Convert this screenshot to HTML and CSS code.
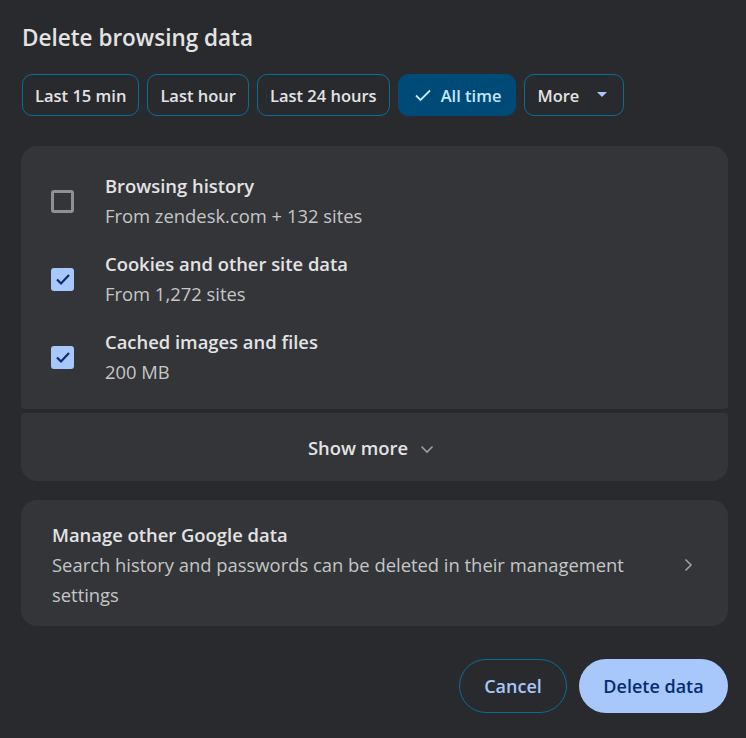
FILE: index.html
```html
<!DOCTYPE html>
<html lang="en">
<head>
    <meta charset="UTF-8">
    <meta name="viewport" content="width=device-width, initial-scale=1.0">
    <title>Delete browsing data</title>
    <link rel="stylesheet" href="styles.css">
</head>
<body>
    <div class="dialog">
        <h1 class="title">Delete browsing data</h1>

        <div class="chips">
            <button class="chip">Last 15 min</button>
            <button class="chip">Last hour</button>
            <button class="chip">Last 24 hours</button>
            <button class="chip selected">
                <svg class="chip-check" width="20" height="20" viewBox="0 0 20 20"><path d="M3 10.5 L7.5 15 L17 5.5" fill="none" stroke="currentColor" stroke-width="1.8"/></svg>
                All time
            </button>
            <button class="chip more">
                More
                <svg class="chip-arrow" width="10" height="6" viewBox="0 0 10 6"><path d="M0 0 H10 L5 5 Z" fill="currentColor"/></svg>
            </button>
        </div>

        <div class="card types">
            <div class="row">
                <span class="checkbox"></span>
                <div class="row-text">
                    <div class="row-title">Browsing history</div>
                    <div class="row-sub">From zendesk.com + 132 sites</div>
                </div>
            </div>
            <div class="row">
                <span class="checkbox checked">
                    <svg width="18" height="18" viewBox="0 0 18 18"><path d="M3 9.5 L7 13.5 L15 5" fill="none" stroke="currentColor" stroke-width="2.2"/></svg>
                </span>
                <div class="row-text">
                    <div class="row-title">Cookies and other site data</div>
                    <div class="row-sub">From 1,272 sites</div>
                </div>
            </div>
            <div class="row">
                <span class="checkbox checked">
                    <svg width="18" height="18" viewBox="0 0 18 18"><path d="M3 9.5 L7 13.5 L15 5" fill="none" stroke="currentColor" stroke-width="2.2"/></svg>
                </span>
                <div class="row-text">
                    <div class="row-title">Cached images and files</div>
                    <div class="row-sub">200 MB</div>
                </div>
            </div>
        </div>

        <div class="card show-more">
            Show more
            <svg class="chevron-down" width="16" height="16" viewBox="0 0 16 16"><path d="M2.5 5.5 L8 11 L13.5 5.5" fill="none" stroke="currentColor" stroke-width="1.6"/></svg>
        </div>

        <div class="card manage">
            <div class="manage-text">
                <div class="row-title">Manage other Google data</div>
                <div class="row-sub">Search history and passwords can be deleted in their management settings</div>
            </div>
            <svg class="chevron-right" width="16" height="16" viewBox="0 0 16 16"><path d="M5.5 2.5 L11 8 L5.5 13.5" fill="none" stroke="currentColor" stroke-width="1.6"/></svg>
        </div>

        <div class="actions">
            <button class="btn cancel">Cancel</button>
            <button class="btn primary">Delete data</button>
        </div>
    </div>
</body>
</html>
```

FILE: styles.css
```css
* {
    margin: 0;
    padding: 0;
    box-sizing: border-box;
}

body {
    background: #292a2e;
    font-family: 'Open Sans', 'Noto Sans', sans-serif;
    color: #e3e3e3;
}

.dialog {
    padding: 23px 18px 0 21px;
}

.title {
    font-size: 22.5px;
    font-weight: 600;
    line-height: 30px;
    padding-left: 1px;
}

.chips {
    display: flex;
    gap: 8px;
    margin-top: 21px;
    padding-left: 1px;
}

.chip {
    height: 42px;
    padding: 0 12px;
    border: 1px solid #0a6c9c;
    border-radius: 10px;
    background: transparent;
    color: #e3e3e3;
    font-family: inherit;
    font-size: 16.5px;
    font-weight: 600;
    display: flex;
    align-items: center;
    gap: 8px;
}

.chip.selected {
    background: #004a77;
    border-color: #004a77;
    color: #c2e7ff;
    padding: 0 14px;
}

.chip.more {
    gap: 18px;
    padding-right: 16px;
}

.chip-arrow {
    color: #a8c7fa;
}

.card {
    background: #343539;
    border-radius: 16px;
}

.types {
    margin-top: 30px;
    padding: 25px 30px 22px;
    border-radius: 16px 16px 4px 4px;
    display: flex;
    flex-direction: column;
    gap: 18px;
}

.row {
    display: flex;
    align-items: center;
    gap: 31px;
}

.checkbox {
    width: 23px;
    height: 23px;
    border: 3px solid #8f9094;
    border-radius: 3px;
    flex-shrink: 0;
    display: flex;
    align-items: center;
    justify-content: center;
}

.checkbox.checked {
    background: #a8c7fa;
    border: none;
    color: #062e6f;
}

.row-title {
    font-size: 18.4px;
    font-weight: 600;
    line-height: 30px;
    color: #e3e3e3;
}

.row-sub {
    font-size: 18.4px;
    line-height: 30px;
    color: #c4c7c5;
}

.show-more {
    margin-top: 4px;
    height: 68px;
    border-radius: 4px 4px 16px 16px;
    display: flex;
    align-items: center;
    justify-content: center;
    gap: 11px;
    font-size: 18.4px;
    font-weight: 600;
    color: #e3e3e3;
    padding-right: 6px;
}

.chevron-down {
    color: #9aa0a6;
    margin-top: 3px;
}

.manage {
    margin-top: 19px;
    padding: 20px 32px 16px 31px;
    display: flex;
    align-items: center;
    gap: 40px;
}

.manage-text {
    flex: 1;
}

.chevron-right {
    color: #9aa0a6;
    flex-shrink: 0;
}

.actions {
    display: flex;
    justify-content: flex-end;
    gap: 12px;
    margin-top: 33px;
}

.btn {
    height: 54px;
    border-radius: 27px;
    font-family: inherit;
    font-size: 18px;
    font-weight: 600;
    padding: 0;
}

.cancel {
    width: 108px;
    background: transparent;
    border: 1px solid #0a6c9c;
    color: #a8c7fa;
}

.primary {
    width: 149px;
    background: #a8c7fa;
    border: none;
    color: #062e6f;
}
```
